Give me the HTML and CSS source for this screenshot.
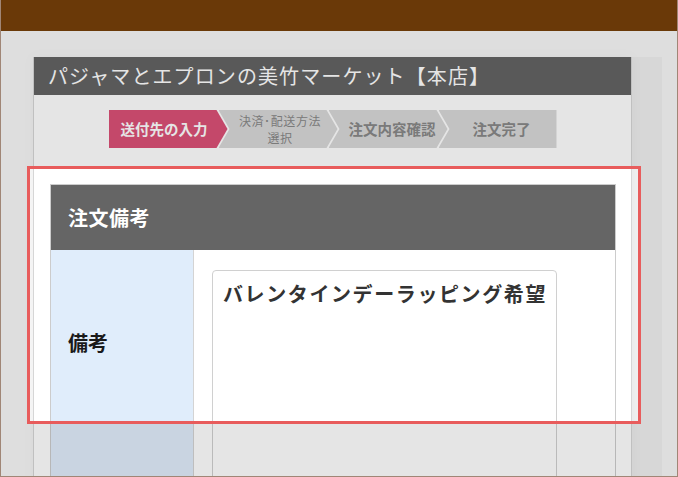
FILE: index.html
```html
<!DOCTYPE html>
<html lang="ja">
<head>
<meta charset="utf-8">
<title>注文備考</title>
<link rel="stylesheet" href="styles.css">
</head>
<body>
<div class="frame">
  <header class="topbar"></header>
  <main class="page">
    <section class="card">
      <h1 class="card-title">パジャマとエプロンの美竹マーケット【本店】</h1>
      <div class="card-body">
        <ol class="steps">
          <li class="step step-first active">送付先の入力</li>
          <li class="step step-small">決済･配送方法<br>選択</li>
          <li class="step">注文内容確認</li>
          <li class="step step-last">注文完了</li>
        </ol>
        <table class="note-table">
          <colgroup>
            <col class="col-label">
            <col class="col-value">
          </colgroup>
          <tr>
            <th colspan="2" class="note-head">注文備考</th>
          </tr>
          <tr>
            <td class="note-label">備考</td>
            <td class="note-value">
              <textarea class="note-input" wrap="off">バレンタインデーラッピング希望</textarea>
            </td>
          </tr>
        </table>
      </div>
      <div class="highlight"></div>
    </section>
  </main>
</div>
</body>
</html>
```

FILE: styles.css
```css
html, body {
  margin: 0;
  padding: 0;
  height: 477px;
  overflow: hidden;
}

body {
  font-family: "Noto Sans CJK JP", "Noto Sans", sans-serif;
  background: #f8f8f8;
}

.frame {
  box-sizing: border-box;
  height: 477px;
  border: 1px solid #a08676;
  border-top: none;
  background: #f8f8f8;
  overflow: hidden;
}

.topbar {
  height: 31px;
  background: #76400a;
}

.page {
  padding: 26px 0 0 32px;
}

.card {
  position: relative;
  width: 599px;
  box-sizing: border-box;
  background: #ffffff;
  border-left: 1px solid #d6d6d6;
  border-right: 1px solid #d6d6d6;
  box-shadow: 30px 0 0 rgba(0, 0, 0, 0.03), 0 0 12px rgba(0, 0, 0, 0.04);
  height: 460px;
}

.card-title {
  margin: 0;
  height: 38px;
  padding-left: 14px;
  background: #646464;
  color: #ffffff;
  font-size: 20px;
  line-height: 38px;
  font-weight: normal;
  letter-spacing: 1.1px;
  white-space: nowrap;
}

.card-body {
  padding: 15px 16px 0 16px;
}

.steps {
  list-style: none;
  margin: 0 auto;
  padding: 0;
  width: 448px;
  height: 38px;
  display: flex;
}

.step {
  flex: 0 0 119px;
  height: 38px;
  margin-left: -9px;
  background: #d9d9d9;
  color: #888888;
  font-size: 14.5px;
  font-weight: bold;
  line-height: 1.1;
  display: flex;
  align-items: center;
  justify-content: center;
  text-align: center;
  padding-left: 8px;
  box-sizing: border-box;
  clip-path: polygon(0 0, calc(100% - 11px) 0, 100% 50%, calc(100% - 11px) 100%, 0 100%, 11px 50%);
}

.step-first {
  margin-left: 0;
  padding-left: 0;
  padding-right: 8px;
  clip-path: polygon(0 0, calc(100% - 11px) 0, 100% 50%, calc(100% - 11px) 100%, 0 100%);
}

.step-last {
  flex: 1 1 auto;
  clip-path: polygon(0 0, 100% 0, 100% 100%, 0 100%, 11px 50%);
}

.step-small {
  font-size: 12px;
  font-weight: normal;
  line-height: 17.5px;
  letter-spacing: 0.6px;
  padding-right: 4px;
}

.active {
  background: #db5177;
  color: #ffffff;
}

.note-table {
  margin-top: 36px;
  width: 565px;
  table-layout: fixed;
  border-collapse: collapse;
  border: 1px solid #cccccc;
}

.col-label {
  width: 143px;
}

.col-value {
  width: 422px;
}

.note-head {
  height: 65px;
  padding: 0 0 0 17px;
  background: #656565;
  color: #ffffff;
  font-size: 20px;
  font-weight: bold;
  text-align: left;
  letter-spacing: 0.5px;
}

.note-label {
  padding: 78px 0 0 17px;
  vertical-align: top;
  background: #e0edfb;
  color: #1a1a1a;
  font-size: 20px;
  font-weight: bold;
  border-right: 1px solid #d4d4d4;
  height: 260px;
  box-sizing: border-box;
}

.note-value {
  padding: 20px 0 0 18px;
  vertical-align: top;
  background: #ffffff;
}

.note-input {
  display: block;
  box-sizing: border-box;
  width: 345px;
  height: 230px;
  margin: 0;
  padding: 10px 4px 0 10px;
  border: 1px solid #d0d0d0;
  border-radius: 4px;
  font-family: "Noto Sans CJK JP", "Noto Sans", sans-serif;
  font-size: 20px;
  font-weight: bold;
  line-height: 26px;
  letter-spacing: 1.6px;
  color: #333333;
  background: #ffffff;
  resize: none;
  overflow: hidden;
}

.highlight {
  position: absolute;
  left: -7px;
  top: 109px;
  width: 614px;
  height: 258px;
  box-sizing: border-box;
  border: 3px solid #e85c5c;
  box-shadow: 0 0 0 2000px rgba(0, 0, 0, 0.1);
  z-index: 2;
  pointer-events: none;
}
```
